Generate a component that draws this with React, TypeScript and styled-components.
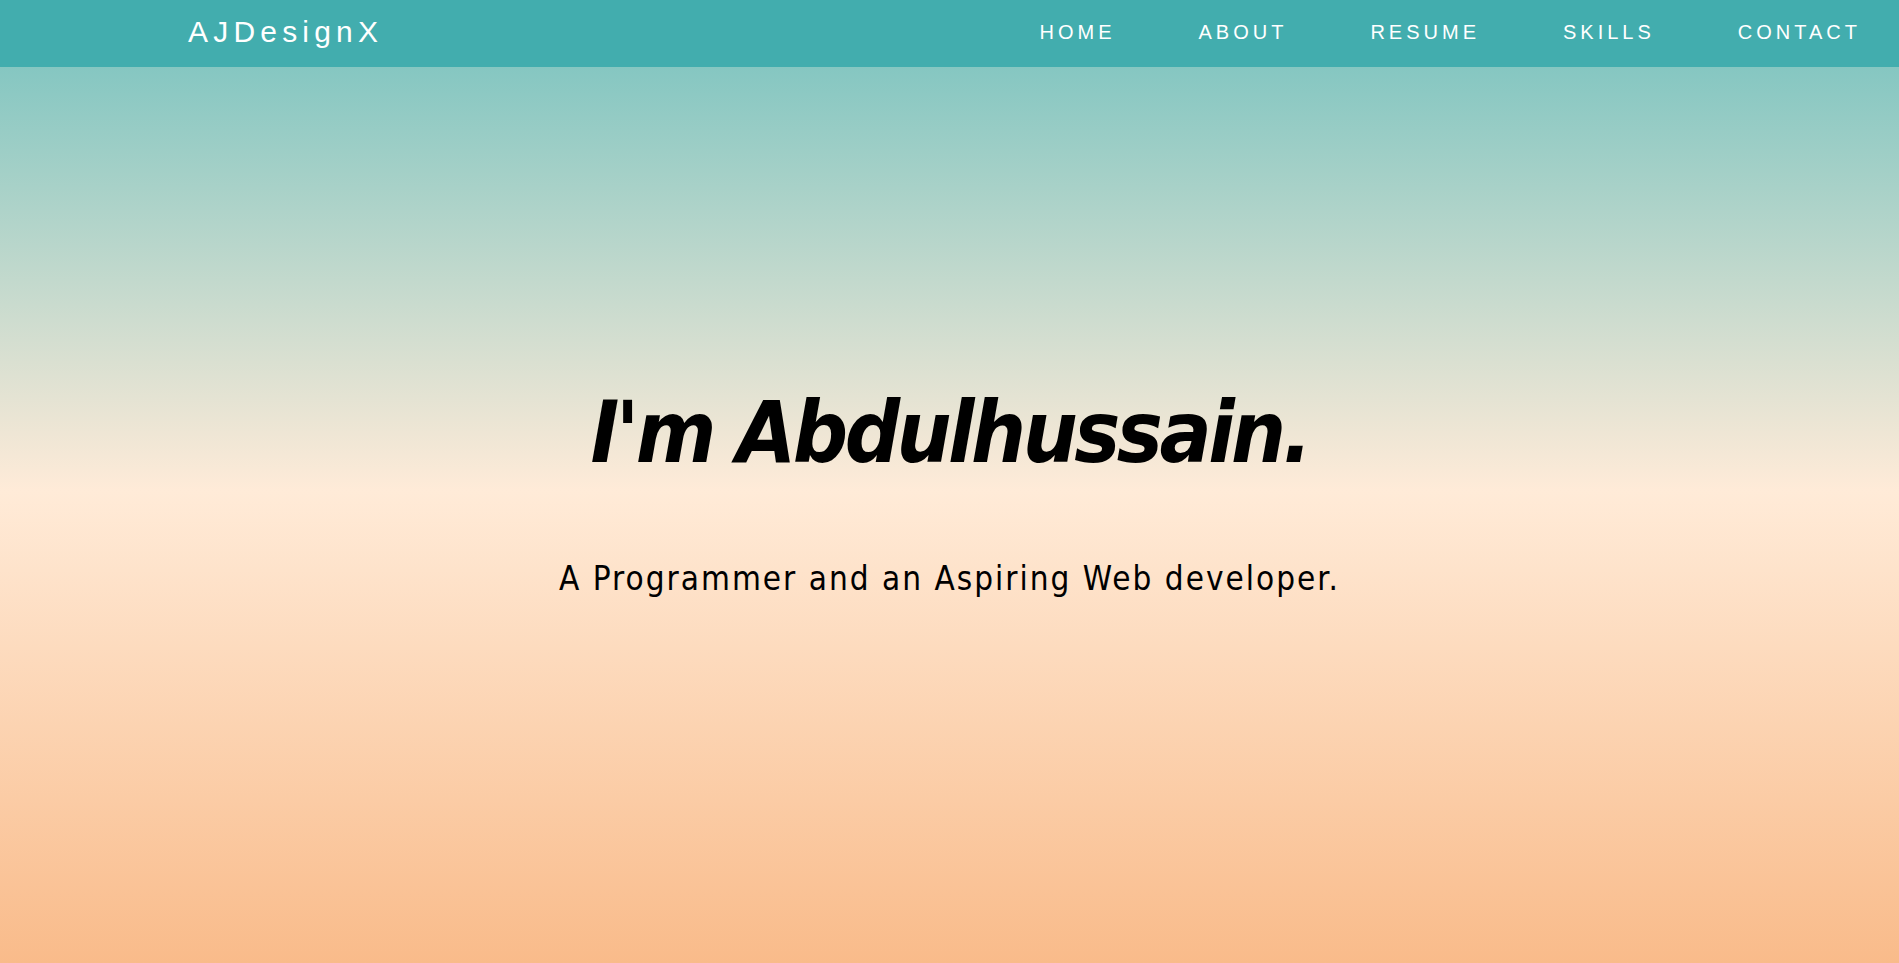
import React from "react";
import styled, { createGlobalStyle } from "styled-components";

const GlobalStyle = createGlobalStyle`
  html, body {
    margin: 0;
    padding: 0;
  }
  body {
    min-height: 100vh;
    background: linear-gradient(to bottom, #72c1be 0%, #ffebd8 51%, #f9bb8a 100%);
    background-attachment: fixed;
    font-family: "Liberation Sans", Arial, sans-serif;
    overflow: hidden;
  }
`;

const Page = styled.div`
  display: flex;
  flex-direction: column;
  height: 963px;
`;

const NavBar = styled.header`
  position: fixed;
  top: 0;
  left: 0;
  right: 0;
  height: 67px;
  background: #42adae;
  display: flex;
  align-items: center;
  justify-content: space-between;
  padding: 0 38px 0 188px;
  z-index: 10;
`;

const Logo = styled.a`
  color: #ffffff;
  font-family: "Liberation Sans", Arial, sans-serif;
  font-size: 30px;
  letter-spacing: 5.2px;
  text-decoration: none;
  margin-top: -4px;
`;

const NavList = styled.nav`
  display: flex;
  align-items: center;
  gap: 83px;
  margin-top: -2px;
`;

const NavLink = styled.a`
  color: #ffffff;
  font-family: "Liberation Sans", Arial, sans-serif;
  font-size: 20px;
  letter-spacing: 4px;
  text-decoration: none;
`;

const Hero = styled.main`
  flex: 1;
  display: flex;
  flex-direction: column;
  align-items: center;
  justify-content: center;
  padding-top: 16px;
`;

const Title = styled.h1`
  margin: 0;
  font-family: "DejaVu Sans Condensed", "DejaVu Sans", sans-serif;
  font-weight: bold;
  font-style: italic;
  font-size: 86px;
  letter-spacing: -3.5px;
  color: #000;
  line-height: 1.2;
`;

const Subtitle = styled.p`
  margin: 75px 0 0;
  font-family: "DejaVu Sans Condensed", "DejaVu Sans", sans-serif;
  font-size: 33px;
  color: #000;
  letter-spacing: 2px;
`;

export default function App() {
  const links = ["HOME", "ABOUT", "RESUME", "SKILLS", "CONTACT"];
  return (
    <>
      <GlobalStyle />
      <Page>
        <NavBar>
          <Logo href="#">AJDesignX</Logo>
          <NavList>
            {links.map((l) => (
              <NavLink key={l} href="#">
                {l}
              </NavLink>
            ))}
          </NavList>
        </NavBar>
        <Hero>
          <Title>I'm Abdulhussain.</Title>
          <Subtitle>A Programmer and an Aspiring Web developer.</Subtitle>
        </Hero>
      </Page>
    </>
  );
}
